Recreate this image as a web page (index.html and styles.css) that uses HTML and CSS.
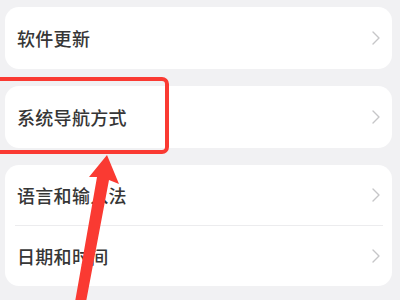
FILE: index.html
```html
<!DOCTYPE html>
<html lang="zh">
<head>
<meta charset="utf-8">
<link rel="stylesheet" href="styles.css">
</head>
<body>
<div class="page">
  <div class="card">
    <div class="row"><span class="label">软件更新</span><svg class="chev" viewBox="0 0 8 14" width="8" height="14"><polyline points="1,1 7,7 1,13"/></svg></div>
  </div>
  <div class="card">
    <div class="row"><span class="label">系统导航方式</span><svg class="chev" viewBox="0 0 8 14" width="8" height="14"><polyline points="1,1 7,7 1,13"/></svg></div>
  </div>
  <div class="card">
    <div class="row short"><span class="label">语言和输入法</span><svg class="chev" viewBox="0 0 8 14" width="8" height="14"><polyline points="1,1 7,7 1,13"/></svg></div>
    <div class="divider"></div>
    <div class="row short"><span class="label">日期和时间</span><svg class="chev" viewBox="0 0 8 14" width="8" height="14"><polyline points="1,1 7,7 1,13"/></svg></div>
  </div>
</div>
<div class="highlight"></div>
<svg class="arrow" viewBox="0 0 400 300" width="400" height="300"><polygon points="107,155 119,184 109,180 86,302 75,302 97,177 89,177"/></svg>
</body>
</html>
```
FILE: styles.css
```css
html, body {
  margin: 0;
  padding: 0;
}
body {
  width: 400px;
  height: 300px;
  overflow: hidden;
  background: #f1f1f3;
  font-family: "Noto Sans CJK SC", "Noto Sans", sans-serif;
  position: relative;
}
.page {
  padding: 7px 8px 0 5px;
  display: flex;
  flex-direction: column;
  gap: 17px;
}
.card {
  background: #ffffff;
  border-radius: 14px;
}
.row {
  height: 62px;
  display: flex;
  align-items: center;
  justify-content: space-between;
  padding: 0 12px 0 12px;
}
.row.short {
  height: 60px;
}
.label {
  font-size: 18px;
  color: #363636;
  font-weight: 500;
  letter-spacing: 0.3px;
}
.chev polyline {
  fill: none;
  stroke: #c6c6c8;
  stroke-width: 1.4;
  stroke-linecap: round;
  stroke-linejoin: round;
}
.divider {
  height: 1px;
  background: #ececee;
  margin: 0 9px 0 10px;
}
.highlight {
  position: absolute;
  left: -12px;
  top: 77px;
  width: 173px;
  height: 69px;
  border: 4px solid #fa3a32;
  border-radius: 7px;
}
.arrow {
  position: absolute;
  left: 0;
  top: 0;
}
.arrow polygon {
  fill: #fa3a32;
}
```
